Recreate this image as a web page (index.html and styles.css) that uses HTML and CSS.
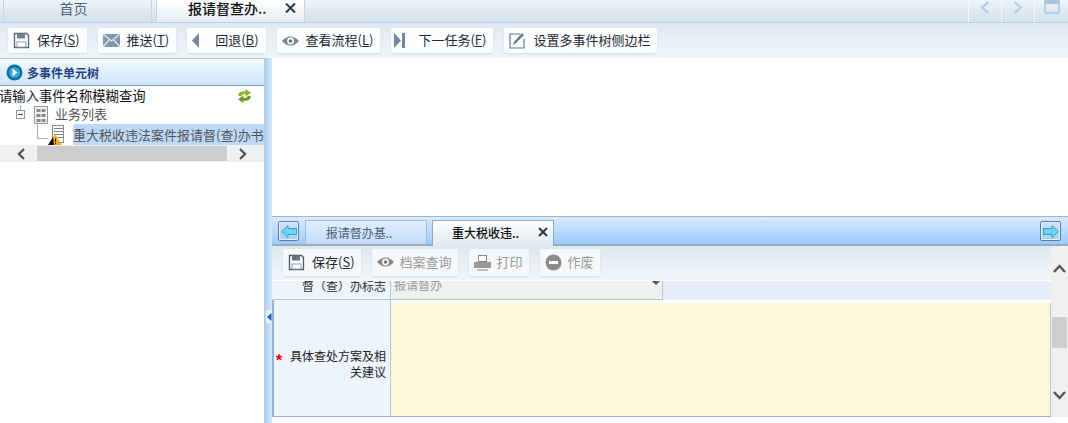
FILE: index.html
```html
<!DOCTYPE html>
<html lang="zh-CN">
<head>
    <meta charset="UTF-8">
    <title>报请督查办</title>
    <link rel="stylesheet" href="styles.css">
</head>
<body>

<!-- 顶部标签 -->
<div class="top-tabs">
    <div class="top-tab">首页</div>
    <div class="top-tab active"><span>报请督查办..</span><svg width="11" height="10" viewBox="0 0 11 10"><path d="M1 .5l9 9M10 .5l-9 9" stroke="#24394d" stroke-width="2"/></svg></div>
    <div class="top-ctrls">
        <div class="ctrl"><svg width="10" height="13" viewBox="0 0 10 13"><path d="M8.500 1 2 6.500 8.500 12" fill="none" stroke="#b3cde6" stroke-width="2.200"/></svg></div>
        <div class="ctrl"><svg width="10" height="13" viewBox="0 0 10 13"><path d="M1.500 1 8 6.500 1.500 12" fill="none" stroke="#b3cde6" stroke-width="2.200"/></svg></div>
        <div class="ctrl top-flush"><svg width="16" height="14" viewBox="0 0 16 14"><rect x="1" y="-2" width="14" height="15" rx="2" fill="none" stroke="#a9c4df" stroke-width="1.500"/><rect x="1" y="0" width="14" height="4" fill="#a9c4df"/></svg></div>
    </div>
</div>

<!-- 主工具栏 -->
<div class="toolbar">
    <div class="btn"><svg width="17" height="17" viewBox="0 0 17 17"><path d="M1.500 1.500h12l2 2v12h-14z" fill="#fff" stroke="#52677a" stroke-width="1.300"/><rect x="4" y="1.500" width="8" height="5" fill="#6e8496"/><rect x="4" y="10" width="9" height="5" fill="#fff" stroke="#8fa2b2"/></svg><span>保存(<u>S</u>)</span></div>
    <div class="btn"><svg width="17" height="14" viewBox="0 0 17 14"><rect width="17" height="13" fill="#7f97a8"/><path d="M0 0l8.500 7L17 0M0 13l6-7M17 13l-6-7" fill="none" stroke="#e4edf3" stroke-width="1.200"/></svg><span>推送(<u>T</u>)</span></div>
    <div class="btn gap-back"><svg width="8" height="15" viewBox="0 0 8 15"><path d="M7 0v15L0 7.500z" fill="#6f8a9d"/></svg><span>回退(<u>B</u>)</span></div>
    <div class="btn"><svg width="17" height="12" viewBox="0 0 17 12"><path d="M0 6q8.500-9 17 0-8.500 9-17 0z" fill="#71899b"/><circle cx="8.500" cy="6" r="3.400" fill="#fff"/><circle cx="8.500" cy="6" r="1.800" fill="#5c7486"/></svg><span>查看流程(<u>L</u>)</span></div>
    <div class="btn gap-next"><svg width="11" height="15" viewBox="0 0 11 15"><path d="M0 0l7 7.500-7 7.500z" fill="#6f8a9d"/><rect x="8" width="3" height="15" fill="#6f8a9d"/></svg><span>下一任务(<u>F</u>)</span></div>
    <div class="btn"><svg width="17" height="17" viewBox="0 0 17 17"><path d="M11 2H1v14h14V7" fill="none" stroke="#62798b" stroke-width="1.200"/><path d="M4 13l1-3 8-9 2 2-8 8z" fill="#62798b"/></svg><span>设置多事件树侧边栏</span></div>
</div>

<div class="main">
    <!-- 左侧树 -->
    <div class="side">
        <div class="side-head">
            <svg width="17" height="17" viewBox="0 0 17 17"><circle cx="8.500" cy="8.500" r="8" fill="#0d6f9f"/><circle cx="8.500" cy="8.500" r="5.500" fill="#2fa6d6"/><path d="M6.500 4.500l5 4-5 4z" fill="#fff"/></svg>
            <span>多事件单元树</span>
        </div>
        <div class="search-row">
            <span class="search-text">请输入事件名称模糊查询</span>
            <svg width="15" height="14" viewBox="0 0 15 14"><path d="M1 6.500Q2 1.500 8.500 2.500V0L14 3.800 8.500 7.500V5Q5 4.500 4 7.500z" fill="#8fb52e"/><path d="M14 7.500q-1 5-7.500 4V14L1 10.200 6.500 6.500V9q3.500.5 4.500-2.500z" fill="#6f9a1f"/></svg>
        </div>
        <div class="tree-row level-1">
            <svg width="9" height="19" viewBox="0 0 9 19"><path d="M4.500 0v5" stroke="#9aa"/><rect x=".5" y="5.500" width="8" height="8" fill="#f4f6f8" stroke="#8c98a4"/><path d="M2 9.500h5" stroke="#445"/></svg>
            <svg width="14" height="18" viewBox="0 0 14 18"><rect x=".5" y=".5" width="13" height="17" fill="#f2f2f2" stroke="#999"/><path d="M2.500 3h4v3h-4zM7.500 3h4v3h-4zM2.500 8h4v3h-4zM7.500 8h4v3h-4zM2.500 13h4v3h-4zM7.500 13h4v3h-4z" fill="#8a8a8a"/></svg>
            <span>业务列表</span>
        </div>
        <div class="tree-row level-2">
            <svg class="tree-line" width="14" height="19" viewBox="0 0 14 19"><path d="M.5 0v14.500H11" fill="none" stroke="#a3aeb8"/></svg>
            <svg class="doc-ico" width="18" height="21" viewBox="0 0 18 21"><rect x="4.500" y="1.500" width="11" height="17" fill="#fff" stroke="#888"/><path d="M6 4.500h9M6 7.500h9M6 10.500h9M6 13.500h9" stroke="#888"/><path d="M0 21 7 10.500 14 21z" fill="#f3a91d"/><path d="M0 21 5 13l1 8z" fill="#111"/><path d="M7.500 14.500v3.500M7.500 19v1" stroke="#111"/></svg>
            <span class="tree-sel">重大税收违法案件报请督(查)办书</span>
        </div>
        <div class="h-scroll">
            <svg width="10" height="12" viewBox="0 0 10 12"><path d="M8 1 3 6l5 5" fill="none" stroke="#555" stroke-width="2.400"/></svg>
            <div class="h-thumb"></div>
            <svg width="10" height="12" viewBox="0 0 10 12"><path d="M2 1l5 5-5 5" fill="none" stroke="#555" stroke-width="2.400"/></svg>
        </div>
    </div>

    <div class="splitter">
        <div class="split-handle"><svg width="5" height="8" viewBox="0 0 5 8"><path d="M4.500 0v8L0 4z" fill="#1c5fb8"/></svg></div>
    </div>

    <!-- 右侧 -->
    <div class="content">
        <div class="blank"></div>
        <div class="sub-tabs">
            <div class="arrow-btn"><svg width="16" height="13" viewBox="0 0 16 13"><path d="M7 .5v3h8.500v6H7v3L.5 6.500z" fill="#6fd3ee" stroke="#3f9dc4"/></svg></div>
            <div class="sub-tab">报请督办基..</div>
            <div class="sub-tab active"><span>重大税收违..</span><svg width="10" height="10" viewBox="0 0 10 10"><path d="M1 1l8 8M9 1l-8 8" stroke="#24394d" stroke-width="2"/></svg></div>
            <div class="arrow-btn right"><svg width="16" height="13" viewBox="0 0 16 13"><path d="M9 .5v3H.5v6H9v3l6.500-6z" fill="#6fd3ee" stroke="#3f9dc4"/></svg></div>
        </div>
        <div class="form-wrap">
            <div class="form-col">
                <div class="toolbar sub">
                    <div class="btn"><svg width="17" height="17" viewBox="0 0 17 17"><path d="M1.500 1.500h12l2 2v12h-14z" fill="#fff" stroke="#46596a" stroke-width="1.300"/><rect x="4" y="1.500" width="8" height="5" fill="#5f7585"/><rect x="4" y="10" width="9" height="5" fill="#fff" stroke="#8fa2b2"/></svg><span>保存(<u>S</u>)</span></div>
                    <div class="btn off"><svg width="17" height="12" viewBox="0 0 17 12"><path d="M0 6q8.500-9 17 0-8.500 9-17 0z" fill="#888"/><circle cx="8.500" cy="6" r="3.400" fill="#fff"/><circle cx="8.500" cy="6" r="1.800" fill="#777"/></svg><span>档案查询</span></div>
                    <div class="btn off"><svg width="17" height="17" viewBox="0 0 17 17"><rect x="4.500" y="1.500" width="8" height="6" fill="#fff" stroke="#888"/><path d="M0 8h17v6H0z" fill="#999"/><path d="M3 16h11" stroke="#888"/></svg><span>打印</span></div>
                    <div class="btn off"><svg width="17" height="17" viewBox="0 0 17 17"><circle cx="8.500" cy="8.500" r="8" fill="#8c8c8c"/><rect x="4" y="7" width="9" height="3" fill="#fff"/></svg><span>作废</span></div>
                </div>
                <div class="form-view">
                    <div class="form-row clipped">
                        <div class="form-label">督（查）办标志</div>
                        <div class="select-box">报请督办<i class="caret"></i></div>
                    </div>
                    <div class="form-row tall">
                        <div class="form-label"><em>*</em><span>具体查处方案及相关建议</span></div>
                        <div class="note-box"></div>
                    </div>
                </div>
            </div>
            <div class="v-scroll">
                <svg width="13" height="9" viewBox="0 0 13 9"><path d="M1 8l5.500-6L12 8" fill="none" stroke="#555" stroke-width="2.400"/></svg>
                <div class="v-track"><div class="v-thumb"></div></div>
                <svg width="13" height="9" viewBox="0 0 13 9"><path d="M1 1l5.500 6L12 1" fill="none" stroke="#555" stroke-width="2.400"/></svg>
            </div>
        </div>
        <div class="foot"></div>
    </div>
</div>

</body>
</html>
```

FILE: styles.css
```css
* { box-sizing: border-box; }
html, body { margin: 0; height: 423px; overflow: hidden; background: #fff; }
body { font-family: "Noto Sans CJK SC", "Liberation Sans", sans-serif; font-size: 13px; color: #222; display: flex; flex-direction: column; }
svg { display: block; flex: none; }
u { text-decoration: underline; }

.top-tabs { height: 23px; display: flex; flex: none; padding-left: 3px; background: linear-gradient(#eff4f9, #d3dfea); border-bottom: 1px solid #b4d0ee; }
.top-tab { width: 149px; height: 22px; padding-right: 8px; line-height: 16px; font-size: 14px; text-align: center; color: #52657a; border-left: 1px solid #c9d6e2; border-right: 1px solid #c9d6e2; }
.top-tab.active { margin-left: 4px; display: flex; justify-content: space-between; padding: 0 8px 0 31px; color: #111; font-weight: 500; background: linear-gradient(#fff, #e6eff5); }
.top-tab.active svg { margin-top: 3px; }
.top-ctrls { margin-left: auto; display: flex; }
.ctrl { width: 33px; height: 22px; border-left: 1px solid #f4f8fb; display: flex; justify-content: center; padding-top: 1px; }
.top-flush { padding-top: 0; width: 34px; }

.toolbar { height: 35px; flex: none; display: flex; align-items: center; gap: 11px; padding: 0 8px; background: linear-gradient(#dfe8f1, #f1f5f9); }
.btn { height: 25px; display: flex; align-items: center; gap: 7px; padding: 0 7px 0 5px; white-space: nowrap; background: #fdfeff; border-radius: 2px; box-shadow: 0 1px 2px #d5dbe0; color: #1d2a35; }
.btn span { margin-top: -2px; }
.gap-back { gap: 15px; }
.gap-next { gap: 13px; padding-left: 3px; }

.main { flex: 1; display: flex; min-height: 0; }
.side { width: 264px; flex: none; overflow: hidden; border-top: 1px solid #b4c8c8; }
.side-head { height: 27px; display: flex; align-items: center; gap: 4px; padding-left: 6px; background: linear-gradient(#f3f9fe, #cde4f6); border-bottom: 1px solid #7fa6bb; font-size: 12px; font-weight: 700; color: #1f4486; }
.search-row { height: 19px; display: flex; align-items: center; justify-content: space-between; padding-right: 12px; }
.search-text { margin-left: -1px; font-size: 13.33px; color: #111; }
.tree-row { display: flex; align-items: center; white-space: nowrap; color: #555; }
.level-1 { height: 19px; padding-left: 16px; gap: 9px; }
.level-1 span { margin: -2px 0 0 -2px; }
.level-2 { height: 21px; padding-left: 37px; align-items: flex-end; }
.tree-line { margin-bottom: 2px; margin-right: -3px; }
.doc-ico { margin-right: 7px; }
.tree-sel { flex: 1; height: 21px; line-height: 22px; background: #bcd9f8; overflow: hidden; }
.h-scroll { height: 17px; display: flex; align-items: center; padding: 0 16px; background: #f0f0f0; gap: 11px; }
.h-thumb { flex: 1; height: 15px; background: #cdcdcd; }

.splitter { width: 8px; flex: none; background: linear-gradient(90deg, #a9cdec, #d5e8f8); padding-top: 252px; display: flex; flex-direction: column; align-items: flex-end; }
.split-handle { width: 6px; height: 13px; background: #e8f1fa; display: flex; align-items: center; justify-content: center; }

.content { flex: 1; min-width: 0; display: flex; flex-direction: column; }
.blank { height: 158px; flex: none; }
.sub-tabs { height: 30px; flex: none; display: flex; align-items: flex-end; padding: 0 7px 0 6px; background: linear-gradient(#d9ebff, #9ccbff); border-top: 1px solid #a0b5c5; border-bottom: 2px solid #98aebb; }
.arrow-btn { width: 21px; height: 20px; align-self: flex-start; margin-top: 4px; display: flex; align-items: center; justify-content: center; background: linear-gradient(#cfe3fb, #a5cdf8); border: 1px solid #5d7f9e; border-radius: 2px; box-shadow: inset 0 0 0 1px #e2effc; }
.arrow-btn.right { margin-left: auto; }
.sub-tab { width: 122px; height: 24px; margin-left: 6px; padding-right: 14px; font-size: 12px; line-height: 24px; text-align: center; color: #4e6176; border: 1px solid #a5c0dc; border-bottom: 0; background: linear-gradient(#dfeeff, #c2dcf8); }
.sub-tab.active { margin-left: 5px; margin-bottom: -2px; height: 26px; display: flex; justify-content: space-between; padding: 0 5px 0 19px; color: #111; font-weight: 500; border-color: #8eadbb; background: linear-gradient(#fff, #dfeaf1); }
.sub-tab.active svg { margin-top: 6px; }
.form-wrap { flex: 1; min-height: 0; display: flex; }
.form-col { flex: 1; min-width: 0; display: flex; flex-direction: column; }
.toolbar.sub { padding: 0 0 2px 11px; background: linear-gradient(#dee8ef, #f1f5f9); border-bottom: 1px solid #fff; }
.sub .btn { height: 27px; padding-right: 6px; background: #f7f8f9; }
.sub .off { gap: 6px; color: #9a9a9a; }
.form-view { flex: 1; min-height: 0; overflow: hidden; }
.form-row { display: flex; }
.form-label { width: 119px; flex: none; font-size: 12px; text-align: right; padding-right: 4px; border-left: 2px solid #8db4e2; }
.clipped { height: 19px; background: #e6ecf9; overflow: hidden; }
.clipped .form-label { border-left-color: #edf4fc; background: #edf4fc; line-height: 9px; border-right: 1px solid #a9d0cb; border-bottom: 1px solid #a9d0cb; color: #333; }
.select-box { width: 272px; position: relative; background: #f0f0f0; font-size: 12px; color: #999; line-height: 7px; padding-left: 3px; border-right: 1px solid #a9d0cb; border-bottom: 1px solid #a9d0cb; }
.caret { position: absolute; right: 2px; top: 0; border: 4px solid transparent; border-top: 4px solid #555; border-bottom: 0; }
.tall { height: 117px; border-bottom: 1px solid #8db4e2; }
.tall .form-label { display: flex; align-items: flex-start; gap: 6px; padding: 48px 4px 0 1px; line-height: 16px; background: #edf4fc; border-right: 1px solid #a9d0cb; color: #222; }
.form-label em { margin-top: 4px; font-size: 16px; line-height: 16px; color: #f00; font-style: normal; font-weight: 700; flex: none; }
.form-label span { flex: 1; }
.note-box { flex: 1; margin-top: 3px; background: #fef8dd; border-right: 1px solid #a9d0cb; }
.v-scroll { width: 17px; flex: none; display: flex; flex-direction: column; align-items: center; padding: 18px 0 17px; background: #f0f0f0; }
.v-track { flex: 1; width: 100%; padding-top: 44px; }
.v-thumb { width: 15px; height: 31px; margin-left: 1px; background: #cdcdcd; }
.foot { height: 6px; flex: none; }
```
